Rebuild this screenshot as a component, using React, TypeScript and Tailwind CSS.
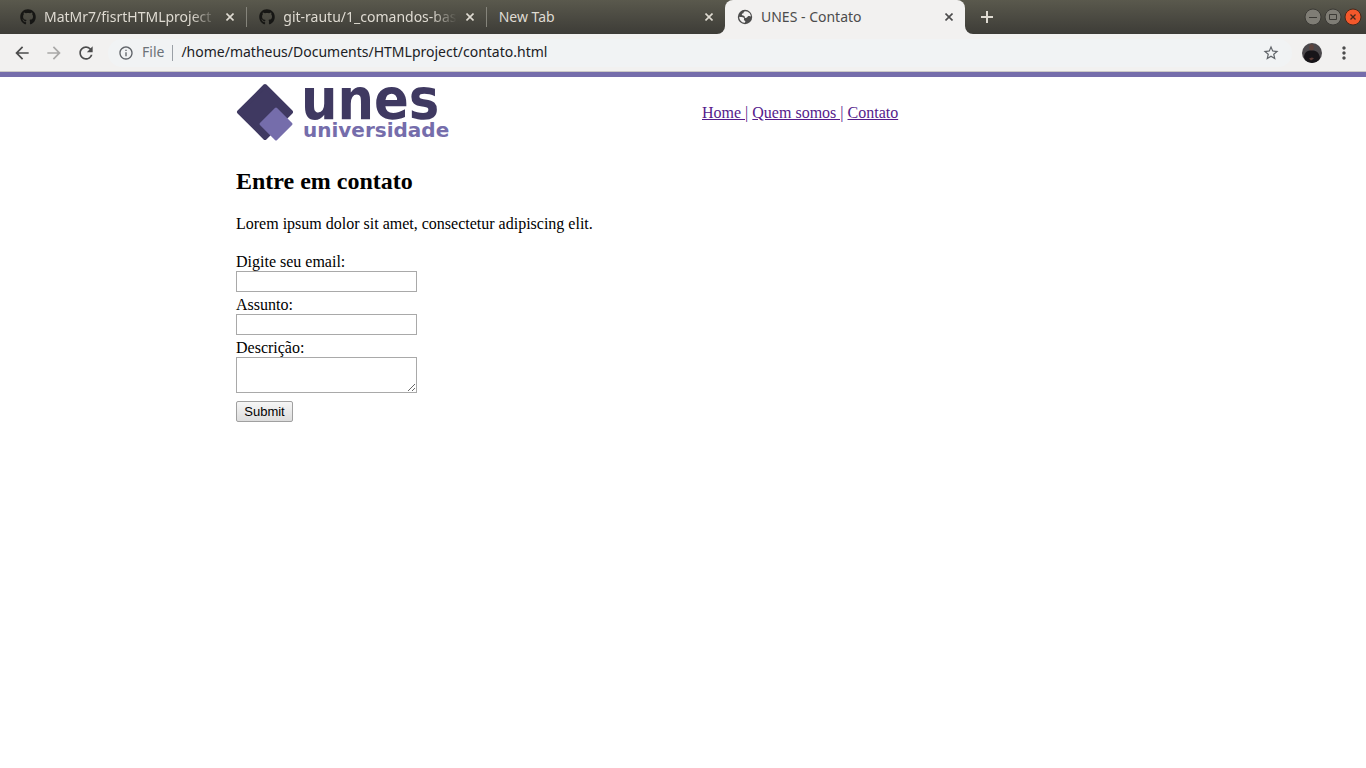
import type { ReactNode } from "react";
import { FaGithub } from "react-icons/fa";
import {
  MdArrowBack,
  MdArrowForward,
  MdInfoOutline,
  MdMoreVert,
  MdRefresh,
  MdStarBorder,
} from "react-icons/md";

const STRIP = "bg-linear-to-b from-[#5a594d] to-[#3d3c37]";

function GlobeIcon() {
  return (
    <svg viewBox="0 0 16 16" className="size-4 shrink-0">
      <circle cx="8" cy="8" r="7.200" fill="#4c4c4c" />
      <path
        fill="#f2f1f0"
        d="M8.500 2.200C6.500 2.300 6.800 3.600 6.300 4.300C5.700 5 4.800 4.700 4.800 5.800C4.900 6.900 7 6.500 7.500 7.200C8 8 7.500 8.700 8.300 9C9.300 9.200 10.500 8.200 11 7.300C11.500 6.500 13.500 7.200 13.900 7.500C13.800 5 12 2.500 8.500 2.200Z"
      />
      <path
        fill="#f2f1f0"
        d="M2.200 7.800C3.500 8.200 5.800 7.800 6.800 8.800C7.700 9.700 6.500 10.500 7 11.200C7.500 11.800 8.500 11.500 8.300 12.500C8.200 13.200 7.800 13.800 7.300 13.800C4.500 13.500 2.200 11 2.200 7.800Z"
      />
    </svg>
  );
}

function CloseButton({ title }: { title: string }) {
  return (
    <button type="button" aria-label={`Close ${title}`} className="flex size-4 shrink-0 items-center justify-center">
      <svg viewBox="0 0 8 8" className="size-2" stroke="currentColor" strokeWidth="1.6" fill="none">
        <path d="M0.5 0.5 7.5 7.5M7.5 0.5 0.5 7.5" />
      </svg>
    </button>
  );
}

function Tab({ title, icon, fade = false }: { title: string; icon?: ReactNode; fade?: boolean }) {
  return (
    <div className="flex min-w-0 flex-1 items-center gap-2 pr-2 pl-3">
      {icon}
      <a
        href="#"
        className={
          fade
            ? "mr-[-3px] min-w-0 flex-1 overflow-hidden pb-0.5 whitespace-nowrap mask-r-from-85%"
            : "min-w-0 flex-1 overflow-hidden pb-0.5 whitespace-nowrap"
        }
      >
        {title}
      </a>
      <CloseButton title={title} />
    </div>
  );
}

function Divider() {
  return <span className="h-5 w-px shrink-0 bg-[#85847b]" />;
}

function TabStrip() {
  return (
    <div className="flex h-[34px] bg-[#f2f1f0] text-[14px]">
      <div className={`flex w-[725px] items-center rounded-br-lg pl-2 text-[#dfdbd2] ${STRIP}`}>
        <Tab title="MatMr7/fisrtHTMLproject" fade icon={<FaGithub className="size-4 shrink-0 text-[#161614]" />} />
        <Divider />
        <Tab title="git-rautu/1_comandos-basicos" fade icon={<FaGithub className="size-4 shrink-0 text-[#161614]" />} />
        <Divider />
        <Tab title="New Tab" />
      </div>
      <div className={`flex w-60 ${STRIP}`}>
        <div className="flex flex-1 rounded-t-lg bg-[#f2f1f0] text-[#4c4c4c]">
          <Tab title="UNES - Contato" icon={<GlobeIcon />} />
        </div>
      </div>
      <div className={`flex flex-1 items-center justify-between rounded-bl-lg pr-1 pl-4 ${STRIP}`}>
        <button type="button" aria-label="New tab" className="text-[#dfdbd2]">
          <svg viewBox="0 0 12 12" className="size-3" stroke="currentColor" strokeWidth="2">
            <path d="M6 0V12M0 6H12" />
          </svg>
        </button>
        <div className="flex gap-0.5">
          <button type="button" aria-label="Minimize">
            <svg viewBox="0 0 18 18" className="size-[18px]" fill="none" stroke="#3b3a35">
              <circle cx="9" cy="9" r="8" fill="#7f7d75" />
              <path d="M5 9.500H13" />
            </svg>
          </button>
          <button type="button" aria-label="Maximize">
            <svg viewBox="0 0 18 18" className="size-[18px]" fill="none" stroke="#3b3a35">
              <circle cx="9" cy="9" r="8" fill="#7f7d75" />
              <path d="M5.500 6.500H12.500V11.500H5.500Z" />
            </svg>
          </button>
          <button type="button" aria-label="Close window">
            <svg viewBox="0 0 18 18" className="size-[18px]" fill="none" stroke="#46291c">
              <circle cx="9" cy="9" r="8" fill="#f4582b" />
              <path d="M6.500 6.500 11.500 11.500M11.500 6.500 6.500 11.500" strokeWidth="1.300" />
            </svg>
          </button>
        </div>
      </div>
    </div>
  );
}

function Toolbar() {
  return (
    <div className="flex h-[38px] items-center border-b border-[#cbc9c7] bg-[#f2f1f0] pr-3 pl-3 text-[14px] text-[#4c4c4c]">
      <div className="flex gap-3">
        <button type="button" aria-label="Back">
          <MdArrowBack className="size-5" />
        </button>
        <button type="button" aria-label="Forward" className="text-[#a9a8a7]">
          <MdArrowForward className="size-5" />
        </button>
        <button type="button" aria-label="Reload">
          <MdRefresh className="size-5" />
        </button>
      </div>
      <div className="ml-3 flex h-7 flex-1 items-center rounded-full bg-[#f1f3f4] pr-3 pl-2.5">
        <MdInfoOutline className="size-4 text-[#5f6368]" />
        <span className="ml-2 pb-0.5 text-[#6c7278]">File</span>
        <span className="mx-2 h-4 w-px bg-[#9aa0a6]" />
        <input
          aria-label="Address"
          defaultValue="/home/matheus/Documents/HTMLproject/contato.html"
          className="min-w-0 flex-1 bg-transparent pb-0.5 text-[#202124] outline-none"
        />
        <button type="button" aria-label="Bookmark this page" className="text-[#5f6368]">
          <MdStarBorder className="size-[18px]" />
        </button>
      </div>
      <button type="button" aria-label="Profile" className="ml-2.5">
        <svg viewBox="0 0 20 20" className="size-5">
          <defs>
            <clipPath id="avatar">
              <circle cx="10" cy="10" r="10" />
            </clipPath>
          </defs>
          <g clipPath="url(#avatar)">
            <path fill="#4b484b" d="M0 0H20V20H0Z" />
            <ellipse cx="9.500" cy="4.500" rx="2.300" ry="3.200" fill="#5e433d" />
            <path fill="#171519" d="M2 14C2.500 9 5 8 8 7.500H11.500C15 8 17 10 18 15L16 20H4Z" />
            <path fill="#5e3c36" d="M7 15.500 10 14.500 12 15.500 9 17.500Z" />
          </g>
        </svg>
      </button>
      <button type="button" aria-label="Menu" className="ml-3">
        <MdMoreVert className="size-5" />
      </button>
    </div>
  );
}

function Logo() {
  return (
    <svg viewBox="0 0 214 60" className="h-[60px] w-[214px] overflow-visible" role="img" aria-label="unes universidade">
      <path
        d="M29 4 55 30 29 56 3 30Z"
        fill="#3f3961"
        stroke="#3f3961"
        strokeWidth="4"
        strokeLinejoin="round"
      />
      <path
        d="M40 27 55 42 40 57 25 42Z"
        fill="#756dab"
        stroke="#756dab"
        strokeWidth="3"
        strokeLinejoin="round"
      />
      <text x="65" y="37" fill="#3f3961" fontSize="57" fontWeight="700" fontFamily="'DejaVu Sans Condensed', 'Noto Sans', sans-serif">
        unes
      </text>
      <text x="67" y="55" fill="#756dab" fontSize="20" fontWeight="700" fontFamily="'DejaVu Sans', sans-serif">
        universidade
      </text>
    </svg>
  );
}

const FIELD = "block w-[181px] border border-[#a9a9a9] bg-white px-1 font-['Liberation_Sans',sans-serif] text-[13px]";

export default function App() {
  return (
    <div className="min-h-screen bg-white">
      <header className="font-['Noto_Sans',sans-serif]">
        <TabStrip />
        <Toolbar />
      </header>
      <main className="border-t-5 border-[#756dab] font-['Liberation_Serif',serif] text-[16px] leading-[18px] text-black">
        <div className="mx-auto max-w-[894px]">
          <div className="flex pt-[5px]">
            <div className="flex-1 basis-[466px]">
              <Logo />
            </div>
            <nav className="flex-1 basis-[428px] pt-[22px] text-[#551a8b]">
              <a href="#home" className="whitespace-pre underline">{"Home |"}</a>{" "}
              <a href="#quem-somos" className="whitespace-pre underline">{"Quem somos |"}</a>{" "}
              <a href="#contato" className="underline">Contato</a>
            </nav>
          </div>
          <h2 className="mt-[26px] text-[24px] leading-[27px] font-bold">Entre em contato</h2>
          <p className="mt-5">Lorem ipsum dolor sit amet, consectetur adipiscing elit.</p>
          <form className="mt-5">
            <div className="mb-1">
              <label htmlFor="email" className="block">Digite seu email:</label>
              <input id="email" type="email" className={`h-[21px] ${FIELD}`} />
            </div>
            <div className="mb-1">
              <label htmlFor="assunto" className="block">Assunto:</label>
              <input id="assunto" type="text" className={`h-[21px] ${FIELD}`} />
            </div>
            <div className="mb-2">
              <label htmlFor="descricao" className="block">Descrição:</label>
              <textarea id="descricao" className={`h-9 resize ${FIELD}`} />
            </div>
            <button
              type="submit"
              className="h-[21px] w-[57px] rounded-xs border border-[#a0a0a0] bg-linear-to-b from-[#f6f6f6] to-[#dddddd] font-['Liberation_Sans',sans-serif] text-[13px] leading-[15px]"
            >
              Submit
            </button>
          </form>
        </div>
      </main>
    </div>
  );
}
